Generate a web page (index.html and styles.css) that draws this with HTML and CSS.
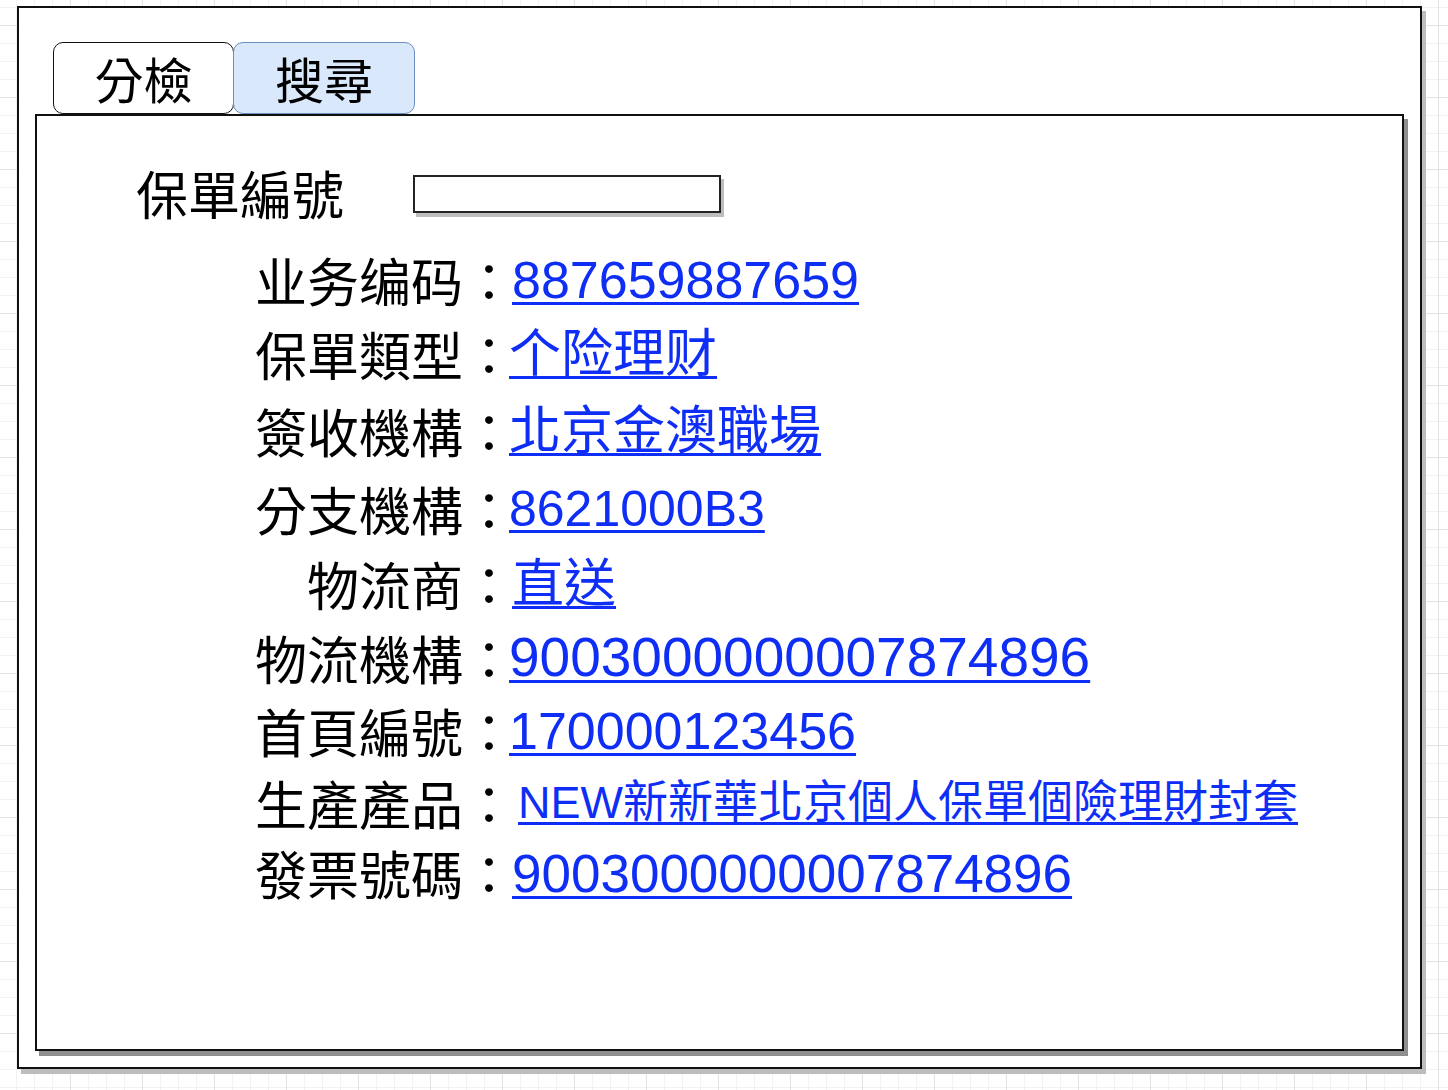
FILE: index.html
```html
<!DOCTYPE html>
<html lang="zh-Hant">
<head>
<meta charset="utf-8">
<title>搜尋</title>
<link rel="stylesheet" href="styles.css">
</head>
<body>
<div class="frame">
  <div class="tabs">
    <div class="tab">分檢</div>
    <div class="tab tab--active">搜尋</div>
  </div>
  <div class="panel">
    <div class="search-row">
      <span class="search-label">保單編號</span>
      <span class="search-input"></span>
    </div>
    <div class="details">
      <span class="lbl">业务编码</span><span class="colon">：</span><a class="val val--in" href="#">887659887659</a>
      <span class="lbl">保單類型</span><span class="colon">：</span><a class="val" href="#">个险理财</a>
      <span class="lbl">簽收機構</span><span class="colon">：</span><a class="val" href="#">北京金澳職場</a>
      <span class="lbl">分支機構</span><span class="colon">：</span><a class="val val--xs" href="#">8621000B3</a>
      <span class="lbl">物流商</span><span class="colon">：</span><a class="val val--in" href="#">直送</a>
      <span class="lbl">物流機構</span><span class="colon">：</span><a class="val val--lg" href="#">9003000000007874896</a>
      <span class="lbl">首頁編號</span><span class="colon">：</span><a class="val" href="#">170000123456</a>
      <span class="lbl">生產產品</span><span class="colon">：</span><a class="val val--sm val--in2" href="#">NEW新新華北京個人保單個險理財封套</a>
      <span class="lbl">發票號碼</span><span class="colon">：</span><a class="val val--md val--in" href="#">9003000000007874896</a>
    </div>
  </div>
</div>
</body>
</html>
```

FILE: styles.css
```css
html {
  height: 100%;
  background-color: #ffffff;
  background-image:
    linear-gradient(to right, #e2e2e2 1px, transparent 1px),
    linear-gradient(to bottom, #e2e2e2 1px, transparent 1px),
    linear-gradient(to right, #f2f2f2 1px, transparent 1px),
    linear-gradient(to bottom, #f2f2f2 1px, transparent 1px);
  background-size: 72px 72px, 72px 72px, 18px 18px, 18px 18px;
  background-position: 70px 0, 0 25px, 16px 0, 0 7px;
}

body {
  margin: 0;
  height: 100%;
  font-family: "Noto Sans CJK TC", "Noto Sans CJK SC", sans-serif;
  color: #000;
}

.frame {
  box-sizing: border-box;
  margin: 6px 0 0 17px;
  width: 1405px;
  height: 1063px;
  padding: 34px 0 0 16px;
  background: #fff;
  border: 2px solid #111;
  box-shadow: 4px 5px 0 #bdbdbd;
}

.tabs {
  display: flex;
  margin-left: 18px;
  height: 72px;
}

.tab {
  box-sizing: border-box;
  width: 181px;
  height: 72px;
  display: flex;
  align-items: center;
  justify-content: center;
  background: #fff;
  border: 1.5px solid #111;
  border-radius: 10px;
  font-size: 49px;
  line-height: 1;
  padding-bottom: 2px;
}

.tab--active {
  width: 182px;
  margin-left: -1px;
  background: #dae8fc;
  border-color: #6c8ebf;
}

.panel {
  box-sizing: border-box;
  width: 1369px;
  height: 937px;
  background: #fff;
  border: 2px solid #111;
  box-shadow: 4px 5px 0 #8f8f8f;
}

.search-row {
  display: flex;
  align-items: center;
  margin: 50px 0 0 99px;
  height: 54px;
}

.search-label {
  font-size: 52px;
  line-height: 1;
  width: 277px;
  white-space: nowrap;
}

.search-input {
  box-sizing: border-box;
  width: 308px;
  height: 38px;
  margin-top: 2px;
  border: 2px solid #222;
  background: #fff;
  box-shadow: 3px 4px 0 #bdbdbd;
}

.details {
  display: grid;
  margin: 24px 0 0 209px;
  grid-template-columns: 217px 46px auto;
  grid-template-rows: 72px 75px 79px 77px 73.5px 74px 73px 70.5px 70px;
  align-items: center;
  justify-items: start;
}

.lbl {
  justify-self: end;
  font-size: 52px;
  line-height: 1;
  white-space: nowrap;
}

.colon {
  justify-self: stretch;
  display: flex;
  justify-content: center;
  padding-left: 6px;
  font-size: 52px;
  line-height: 1;
}

.val {
  font-family: "Liberation Sans", "Noto Sans CJK TC", sans-serif;
  font-size: 52px;
  line-height: 1;
  color: #0f2ef5;
  text-decoration: underline;
  text-decoration-thickness: 3px;
  text-underline-offset: 4px;
  white-space: nowrap;
}

.val--xs { font-size: 50px; }
.val--md { font-size: 53px; }
.val--lg { font-size: 55px; }
.val--sm { font-size: 45px; }
.val--in { margin-left: 3px; }
.val--in2 { margin-left: 9px; }
```
